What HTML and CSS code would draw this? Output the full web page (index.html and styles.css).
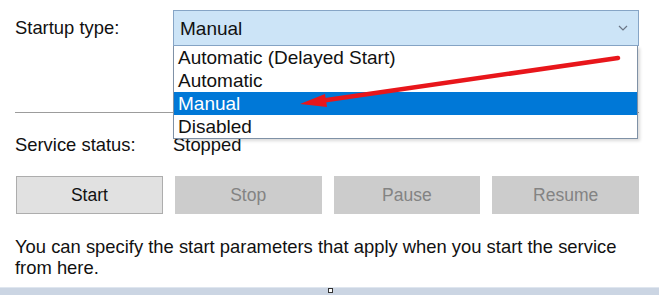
FILE: index.html
```html
<html>
	<head>
		<title>Service Properties</title>
		<meta name="viewport" content="width=device-width, initial-scale=1">
		<link rel="stylesheet" href="styles.css">
	</head>
	<body>

		<div class="page">

			<div class="row startupRow">
				<div class="label startupLabel">Startup type:</div>
				<div class="combo">
					<div class="comboBox">
						<span>Manual</span>
						<svg class="chevron" width="10" height="6" viewBox="0 0 10 6">
							<polyline points="1,1 5,5 9,1" fill="none" stroke="#6b7686" stroke-width="1.2"/>
						</svg>
					</div>
					<div class="comboList">
						<div class="item">Automatic (Delayed Start)</div>
						<div class="item">Automatic</div>
						<div class="item selected">Manual</div>
						<div class="item">Disabled</div>
					</div>
				</div>
			</div>

			<div class="separator"></div>

			<div class="row statusRow">
				<div class="label">Service status:</div>
				<div class="value">Stopped</div>
			</div>

			<div class="buttons">
				<div class="button">Start</div>
				<div class="button disabled">Stop</div>
				<div class="button disabled">Pause</div>
				<div class="button disabled">Resume</div>
			</div>

			<div class="hint">
				You can specify the start parameters that apply when you start the service from here.
			</div>

			<div class="bottomBar">
				<div class="grip"></div>
			</div>

			<svg class="arrow" width="659" height="295" viewBox="0 0 659 295">
				<line x1="618" y1="58" x2="320" y2="101" stroke="#e8161b" stroke-width="4.5" stroke-linecap="round"/>
				<polygon points="300,104 325,94 327,107" fill="#e8161b"/>
			</svg>

		</div>

	</body>
</html>
```

FILE: styles.css
```css
body
{
	margin: 0;
	background-color: white;
	font-family: "Liberation Sans", Arial, sans-serif;
	font-size: 18.4px;
	color: #111;
}

.page
{
	position: relative;
	display: flex;
	flex-direction: column;
	width: 659px;
	height: 295px;
	overflow: hidden;
}

.row
{
	display: flex;
	padding-left: 15px;
}

.label
{
	width: 158px;
	line-height: 22px;
}

.startupRow
{
	margin-top: 10px;
	height: 36px;
}

.startupLabel
{
	margin-top: 7px;
}

.combo
{
	position: relative;
	width: 466px;
}

.comboBox
{
	display: flex;
	align-items: center;
	justify-content: space-between;
	padding: 2px 10px 0 6px;
	box-sizing: border-box;
	height: 36px;
	border: 1px solid #86a5c6;
	background-color: #cce4f7;
	font-size: 19px;
}

.chevron
{
	margin-top: -2px;
}

.comboList
{
	position: absolute;
	left: 0px;
	right: 1px;
	top: 36px;
	background-color: white;
	border: 1px solid #7f91a6;
	border-top: none;
	box-shadow: 2px 2px 3px rgba(0, 0, 0, 0.15);
	font-size: 19px;
	z-index: 2;
}

.item
{
	height: 23px;
	line-height: 24px;
	padding-left: 4px;
}

.selected
{
	background-color: #0078d7;
	color: white;
}

.separator
{
	margin: 66px 20px 0 15px;
	height: 1px;
	background-color: #9c9c9c;
}

.statusRow
{
	margin-top: 21px;
	line-height: 22px;
}

.buttons
{
	display: grid;
	grid-template-columns: repeat(4, 1fr);
	gap: 12px;
	margin: 20px 20px 0 16px;
}

.button
{
	height: 38px;
	box-sizing: border-box;
	border: 1px solid #adadad;
	background-color: #e1e1e1;
	font-size: 17.5px;
	line-height: 36px;
	text-align: center;
}

.disabled
{
	border-color: #cccccc;
	background-color: #cccccc;
	color: #838383;
}

.hint
{
	margin: 22px 20px 0 15px;
	line-height: 21px;
}

.bottomBar
{
	position: relative;
	margin-top: auto;
	height: 7px;
	background-color: #cbd5e3;
	border-top: 1px solid #dfe6ef;
}

.grip
{
	position: absolute;
	left: 328px;
	top: 0px;
	width: 3px;
	height: 3px;
	background-color: white;
	border: 1px solid #333;
}

.arrow
{
	position: absolute;
	left: 0px;
	top: 0px;
	pointer-events: none;
	z-index: 3;
}
```
